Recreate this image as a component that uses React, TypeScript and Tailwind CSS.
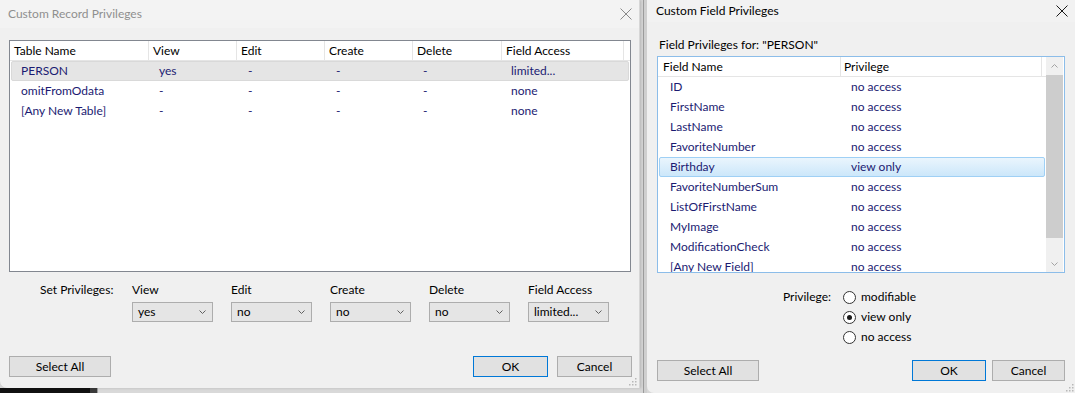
import React from "react";

const FONT = "font-['Lato',sans-serif]";

function CloseX({ color }: { color: string }) {
  return (
    <svg width="12" height="12" viewBox="0 0 12 12">
      <path d="M0.5 0.5 L11.5 11.5 M11.5 0.5 L0.5 11.5" stroke={color} strokeWidth="1" fill="none" />
    </svg>
  );
}

function Chevron({ up = false, color = "#606060" }: { up?: boolean; color?: string }) {
  return (
    <svg width="7" height="4" viewBox="0 0 7 4">
      <polyline
        points={up ? "0.5,3.5 3.5,0.5 6.5,3.5" : "0.5,0.5 3.5,3.5 6.5,0.5"}
        stroke={color}
        strokeWidth="1"
        fill="none"
      />
    </svg>
  );
}

function Grip() {
  const dots: [number, number][] = [
    [7, 1],
    [7, 4], [4, 4],
    [7, 7], [4, 7], [1, 7],
  ];
  return (
    <svg width="9" height="9" viewBox="0 0 9 9">
      {dots.map(([x, y], i) => (
        <rect key={i} x={x} y={y} width="1.5" height="1.5" fill="#b8b8b8" />
      ))}
    </svg>
  );
}

function Select({ value }: { value: string }) {
  return (
    <div className="h-[20px] w-[81px] border border-[#adadad] bg-[#e5e5e5] flex items-center justify-between pl-[5px] pr-[6px] text-black">
      <span>{value}</span>
      <Chevron />
    </div>
  );
}

function Btn({ label, w, primary = false }: { label: string; w: string; primary?: boolean }) {
  return (
    <div
      className={`h-[21px] ${w} flex items-center justify-center bg-[#e1e1e1] border ${
        primary ? "border-[#0078d7]" : "border-[#adadad]"
      } text-black`}
    >
      {label}
    </div>
  );
}

const NAVY = "text-[#1b1b72]";

function RecordDialog() {
  const rows = [
    { name: "PERSON", view: "yes", fa: "limited...", sel: true },
    { name: "omitFromOdata", view: "-", fa: "none", sel: false },
    { name: "[Any New Table]", view: "-", fa: "none", sel: false },
  ];
  const headerCols: [string, string][] = [
    ["Table Name", "w-[139px]"],
    ["View", "w-[88px]"],
    ["Edit", "w-[88px]"],
    ["Create", "w-[88px]"],
    ["Delete", "w-[89px]"],
    ["Field Access", "w-[122px]"],
  ];
  return (
    <div className="relative w-[640px] h-[388px] bg-[#f0f0f0] flex flex-col rounded-bl-[7px] border-r border-[#d6d6d6] shadow-[1px_0_3px_rgba(0,0,0,0.15)]">
      <div className="h-[28px] bg-[#f3f3f3] flex items-center justify-between pl-[8px] pr-[7px] text-[#8f8f8f]">
        <span>Custom Record Privileges</span>
        <CloseX color="#8a8a8a" />
      </div>
      <div className="flex-1 flex flex-col px-[9px] pt-[12px]">
        <div className="h-[232px] w-[622px] border border-[#828790] bg-white flex flex-col">
          <div className="h-[20px] flex border-b border-[#e5e5e5] text-black">
            {headerCols.map(([t, w]) => (
              <div key={t} className={`${w} h-full flex items-center pl-[4px] border-r border-[#e5e5e5]`}>
                {t}
              </div>
            ))}
          </div>
          {rows.map((r) => (
            <div
              key={r.name}
              className={`h-[20px] flex items-center ${NAVY} ${
                r.sel ? "mx-[1px] bg-[#e5e5e5] border border-[#d9d9d9] rounded-[2px]" : "border border-transparent mx-[1px]"
              }`}
            >
              <div className="w-[138px] pl-[9px]">{r.name}</div>
              <div className="w-[88px] pl-[9px]">{r.view}</div>
              <div className="w-[88px] pl-[10px]">-</div>
              <div className="w-[88px] pl-[10px]">-</div>
              <div className="w-[89px] pl-[9px]">-</div>
              <div className="w-[118px] pl-[8px]">{r.fa}</div>
            </div>
          ))}
        </div>

        <div className="flex mt-[10px] text-black">
          <div className="w-[123px] pl-[31px] h-[16px] flex items-center">Set Privileges:</div>
          <div className="flex gap-[18px]">
            {[
              ["View", "yes"],
              ["Edit", "no"],
              ["Create", "no"],
              ["Delete", "no"],
              ["Field Access", "limited..."],
            ].map(([l, v]) => (
              <div key={l} className="flex flex-col w-[81px]">
                <div className="h-[16px] flex items-center">{l}</div>
                <div className="mt-[4px]">
                  <Select value={v} />
                </div>
              </div>
            ))}
          </div>
        </div>

        <div className="flex mt-[34px] mr-[-2px]">
          <Btn label="Select All" w="w-[102px]" />
          <div className="ml-auto">
            <Btn label="OK" w="w-[75px]" primary />
          </div>
          <div className="ml-[9px]">
            <Btn label="Cancel" w="w-[75px]" />
          </div>
        </div>
      </div>
      <div className="absolute right-[2px] bottom-[2px]">
        <Grip />
      </div>
    </div>
  );
}

function FieldDialog() {
  const rows: [string, string][] = [
    ["ID", "no access"],
    ["FirstName", "no access"],
    ["LastName", "no access"],
    ["FavoriteNumber", "no access"],
    ["Birthday", "view only"],
    ["FavoriteNumberSum", "no access"],
    ["ListOfFirstName", "no access"],
    ["MyImage", "no access"],
    ["ModificationCheck", "no access"],
    ["[Any New Field]", "no access"],
  ];
  const radios: [string, boolean][] = [
    ["modifiable", false],
    ["view only", true],
    ["no access", false],
  ];
  return (
    <div className="relative flex-1 h-[393px] bg-[#f0f0f0] flex flex-col rounded-bl-[7px]">
      <div className="h-[22px] flex items-center justify-between pl-[9px] pr-[7px] text-black bg-[#f2f2f2]">
        <span>Custom Field Privileges</span>
        <CloseX color="#1a1a1a" />
      </div>
      <div className="flex-1 flex flex-col px-[10px]">
        <div className="mt-[15px] h-[16px] flex items-center pl-[2px] text-black">Field Privileges for: "PERSON"</div>
        <div className="mt-[3px] h-[217px] w-[408px] border border-[#8cbde9] bg-white flex">
          <div className="flex-1 flex flex-col overflow-hidden">
            <div className="h-[20px] shrink-0 flex border-b border-[#e5e5e5] text-black">
              <div className="w-[183px] h-full flex items-center pl-[5px] border-r border-[#e5e5e5]">Field Name</div>
              <div className="w-[201px] h-full flex items-center pl-[3px] border-r border-[#e5e5e5]">Privilege</div>
            </div>
            {rows.map(([n, p]) => {
              const sel = n === "Birthday";
              return (
                <div
                  key={n}
                  className={`h-[20px] shrink-0 flex items-center mx-[1px] border rounded-[2px] ${NAVY} ${
                    sel
                      ? "border-[#9fd0f5] bg-gradient-to-b from-[#eaf5fd] to-[#cce7fa]"
                      : "border-transparent"
                  }`}
                >
                  <div className="w-[182px] pl-[10px]">{n}</div>
                  <div className="pl-[9px]">{p}</div>
                </div>
              );
            })}
          </div>
          <div className="w-[17px] mr-[1px] bg-[#f0f0f0] flex flex-col">
            <div className="h-[18px] flex items-center justify-center">
              <Chevron up color="#a3a3a3" />
            </div>
            <div className="h-[163px] bg-[#cdcdcd]" />
            <div className="flex-1 flex items-end justify-center pb-[6px]">
              <Chevron color="#a3a3a3" />
            </div>
          </div>
        </div>

        <div className="flex mt-[14px] text-black">
          <div className="w-[174px] h-[20px] flex items-center justify-end">Privilege:</div>
          <div className="ml-[12px] flex flex-col">
            {radios.map(([l, on]) => (
              <div key={l} className="h-[20px] flex items-center">
                <div className="w-[13px] h-[13px] rounded-full border border-[#333333] bg-white flex items-center justify-center">
                  {on && <div className="w-[5px] h-[5px] rounded-full bg-[#1a1a1a]" />}
                </div>
                <span className="ml-[5px]">{l}</span>
              </div>
            ))}
          </div>
        </div>

        <div className="flex mt-[13px]">
          <Btn label="Select All" w="w-[102px]" />
          <div className="ml-auto">
            <Btn label="OK" w="w-[74px]" primary />
          </div>
          <div className="ml-[6px]">
            <Btn label="Cancel" w="w-[73px]" />
          </div>
        </div>
      </div>
      <div className="absolute right-[1px] bottom-[1px]">
        <Grip />
      </div>
    </div>
  );
}

export default function App() {
  return (
    <div className={`w-[1075px] h-[393px] flex overflow-hidden bg-[#d8d8d8] text-[12px] leading-[16px] ${FONT}`}>
      <div className="w-[640px] flex flex-col">
        <RecordDialog />
        <div className="flex-1 flex">
          <div className="w-[90px] bg-[#111111]" />
          <div className="w-[8px] bg-[#3a3a3a] border-r border-[#9a9a9a]" />
          <div className="flex-1 bg-[#d9d9d9]" />
        </div>
      </div>
      <div className="w-[8px] flex">
        <div className="w-[3px] bg-[#d6d6d6]" />
        <div className="w-[1px] bg-[#9c9c9c]" />
        <div className="flex-1 bg-[#cfcfcf]" />
      </div>
      <FieldDialog />
    </div>
  );
}
